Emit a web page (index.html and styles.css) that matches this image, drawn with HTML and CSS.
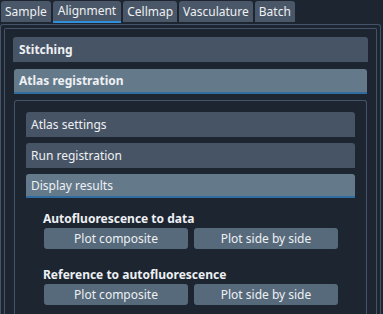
FILE: index.html
```html
<!DOCTYPE html>
<html lang="en">
<head>
  <meta charset="UTF-8">
  <title>Alignment</title>
  <link rel="stylesheet" href="styles.css">
</head>
<body>

  <div class="tabs">
    <div class="tab">Sample</div>
    <div class="tab active">Alignment</div>
    <div class="tab">Cellmap</div>
    <div class="tab">Vasculature</div>
    <div class="tab">Batch</div>
  </div>

  <div class="pane">
    <div class="frame">
      <div class="section">Stitching</div>
      <div class="section open">Atlas registration</div>

      <div class="section-body">
        <div class="item">Atlas settings</div>
        <div class="item">Run registration</div>
        <div class="item open">Display results</div>

        <div class="results">
          <div class="label">Autofluorescence to data</div>
          <div class="btn-row">
            <button>Plot composite</button>
            <button>Plot side by side</button>
          </div>

          <div class="label">Reference to autofluorescence</div>
          <div class="btn-row">
            <button>Plot composite</button>
            <button>Plot side by side</button>
          </div>
        </div>
      </div>
    </div>
  </div>

</body>
</html>
```

FILE: styles.css
```css
:root {
  --bg: #1c2530;
  --tab: #4a5768;
  --header: #475465;
  --header-open: #647a8b;
  --button: #566a7b;
  --line: #44536a;
  --text: #eef0f3;
  --blue: #2f8fdc;
  --blue-dark: #2f6c9f;
}
body {
  margin: 0;
  background: var(--bg);
  color: var(--text);
  font-family: 'Noto Sans', sans-serif;
  font-size: 12px;
  height: 314px;
  overflow: hidden;
}
.tabs {
  display: flex;
  gap: 2px;
  padding: 1px 0 0 1px;
  height: 23px;
  box-sizing: border-box;
}
.tab {
  height: 21px;
  line-height: 21px;
  padding: 0 4px;
  font-size: 12px;
  background: var(--tab);
  border-radius: 3px 3px 0 0;
}
.tab.active {
  height: 20px;
  line-height: 20px;
  border-bottom: 2px solid var(--blue);
  padding: 0 5px;
}
.pane {
  margin-top: 1px;
  width: 381px;
  height: 290px;
  box-sizing: border-box;
  border: 1px solid var(--line);
  border-bottom: none;
  border-radius: 3px 3px 0 0;
  padding: 3px 3px 0 3px;
}
.frame {
  box-sizing: border-box;
  height: 286px;
  border: 1px solid var(--line);
  border-bottom: none;
  border-radius: 2px 2px 0 0;
  padding: 8px 8px 0 8px;
}
.section {
  height: 25px;
  line-height: 25px;
  padding-left: 6px;
  font-weight: bold;
  background: var(--header);
  border-radius: 3px 3px 0 0;
}
.section.open {
  margin: 7px 1px 0;
  height: 23px;
  line-height: 23px;
  padding-left: 5px;
  background: var(--header-open);
  border-bottom: 2px solid var(--blue-dark);
}
.section-body {
  box-sizing: border-box;
  height: 214px;
  margin: 6px 1px 0;
  border: 1px solid var(--line);
  border-bottom: none;
  border-radius: 3px 3px 0 0;
  padding: 11px 11px 0;
}
.item {
  height: 25px;
  line-height: 25px;
  padding-left: 5px;
  margin-bottom: 6px;
  background: var(--header);
  border-radius: 3px 3px 0 0;
}
.item.open {
  height: 22px;
  line-height: 23px;
  margin-bottom: 0;
  background: var(--header-open);
  border-bottom: 2px solid var(--blue-dark);
}
.results {
  padding: 13px 17px 0;
}
.label {
  font-weight: bold;
  line-height: 16px;
}
.btn-row {
  display: flex;
  gap: 6px;
  margin: 1px 0 18px 1px;
}
.btn-row button {
  width: 144px;
  height: 21px;
  padding: 0;
  border: none;
  border-radius: 3px;
  background: var(--button);
  color: var(--text);
  font-family: 'Noto Sans', sans-serif;
  font-size: 12px;
}
```
